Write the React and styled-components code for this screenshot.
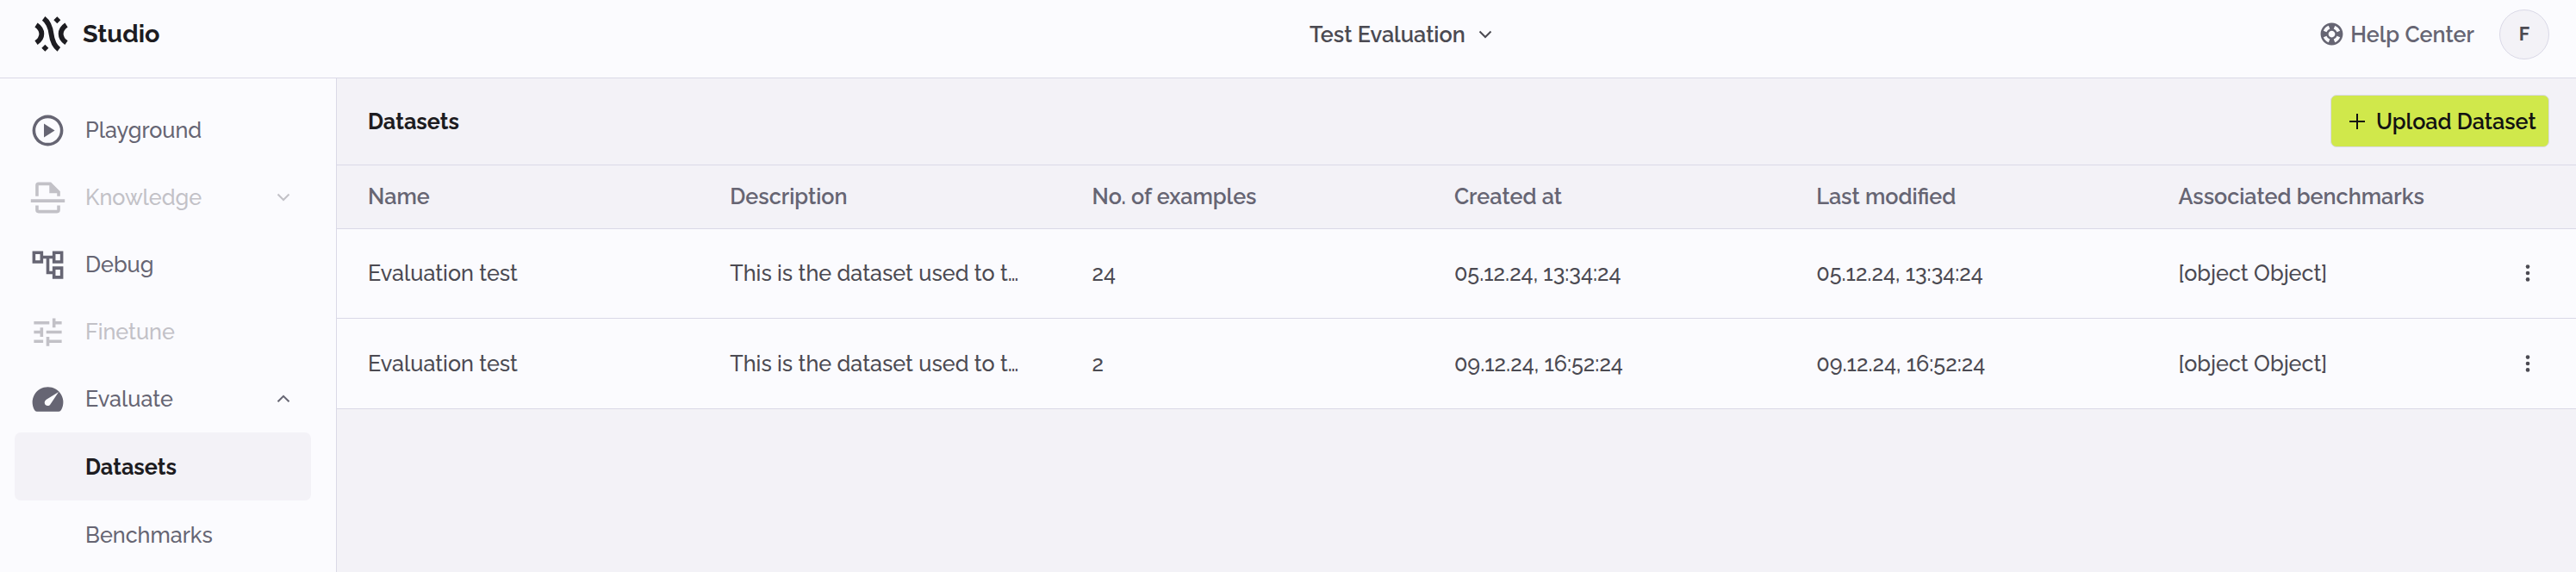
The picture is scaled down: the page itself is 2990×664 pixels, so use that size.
import { MdSupport } from "react-icons/md";
import styled, { createGlobalStyle } from "styled-components";

const navItems = [
	{ name: "Playground", icon: "play" },
	{ name: "Knowledge", icon: "knowledge", disabled: true, chevron: "down" },
	{ name: "Debug", icon: "debug" },
	{ name: "Finetune", icon: "tune", disabled: true },
	{ name: "Evaluate", icon: "gauge", chevron: "up" },
];

const subItems = [{ name: "Datasets", active: true }, { name: "Benchmarks" }];

const columns = [
	"Name",
	"Description",
	"No. of examples",
	"Created at",
	"Last modified",
	"Associated benchmarks",
];

const datasets = [
	{
		name: "Evaluation test",
		description: "This is the dataset used to t…",
		examples: 24,
		created: "05.12.24, 13:34:24",
		modified: "05.12.24, 13:34:24",
		benchmarks: "[object Object]",
	},
	{
		name: "Evaluation test",
		description: "This is the dataset used to t…",
		examples: 2,
		created: "09.12.24, 16:52:24",
		modified: "09.12.24, 16:52:24",
		benchmarks: "[object Object]",
	},
];

const iconPaths = {
	play: "M12 2a10 10 0 1 0 0 20 10 10 0 0 0 0-20zm0 18a8 8 0 1 1 0-16 8 8 0 0 1 0 16zM9.5 7.5v9l7-4.5z",
	knowledge:
		"M4 11V4a2 2 0 0 1 2-2h8l6 6v3h-2V9h-5V4H6v7zM1 13h22v2H1zM4 17h2v3h12v-3h2v3a2 2 0 0 1-2 2H6a2 2 0 0 1-2-2z",
	debug: "M22 11V3h-7v3H9V3H2v8h7V8h2v10h4v3h7v-8h-7v3h-2V8h2v3h7zM7 9H4V5h3v4zm10 6h3v4h-3v-4zm0-10h3v4h-3V5z",
	tune: "M3 17v2h6v-2H3zM3 5v2h10V5H3zm10 16v-2h8v-2h-8v-2h-2v6h2zM7 9v2H3v2h4v2h2V9H7zm14 4v-2H11v2h10zm-6-4h2V7h4V5h-4V3h-2v6z",
	gauge: "M12 4a10 10 0 0 1 8.7 14.9c-.4.7-.9 1.1-1.6 1.1H4.9c-.7 0-1.2-.4-1.6-1.1A10 10 0 0 1 12 4zM19 7.3l-7.9 4.9c-.7.5-1.1 1.1-1.2 1.9-.1 1.2.9 2.1 2 2.1.7 0 1.3-.3 1.7-.9z",
};

const NavIcon = ({ name }) => (
	<svg width="43" height="43" viewBox="0 0 24 24" fill="currentColor">
		<path fillRule="evenodd" d={iconPaths[name]} />
	</svg>
);

const Chevron = ({ up }) => (
	<svg width="16" height="10" viewBox="0 0 16 10" fill="none">
		<path
			d={up ? "M1.5 8.3 8 1.8l6.5 6.5" : "M1.5 1.5 8 8l6.5-6.5"}
			stroke="currentColor"
			strokeWidth="2"
		/>
	</svg>
);

const Logo = () => (
	<svg width="39" height="41" viewBox="0 0 117 123" fill="#1d1c21">
		<g fill="none" stroke="#1d1c21" strokeWidth="17.5">
			<path d="M6 30C18 38 25 48 25 61S18 84 6 92" />
			<path d="M111 30C99 38 92 48 92 61s7 23 19 31" />
			<path d="M32 7C52 22 56 42 58.5 61S65 100 85 115" />
		</g>
		<path d="M79 1l12 12-12 12-12-12zM37 98l12 12-12 12-12-12z" />
	</svg>
);

const App = () => {
	return (
		<Page>
			<GlobalStyle />
			<Header>
				<Brand>
					<Logo />
					<span>Studio</span>
				</Brand>
				<ProjectSelect>
					Test Evaluation
					<Chevron />
				</ProjectSelect>
				<HeaderActions>
					<HelpLink>
						<MdSupport size={31} />
						Help Center
					</HelpLink>
					<Avatar>F</Avatar>
				</HeaderActions>
			</Header>

			<Body>
				<Sidebar>
					{navItems.map((item) => (
						<NavItem key={item.name} $disabled={item.disabled}>
							<NavIcon name={item.icon} />
							<span>{item.name}</span>
							{item.chevron && <Chevron up={item.chevron === "up"} />}
						</NavItem>
					))}
					{subItems.map((item) => (
						<SubItem key={item.name} $active={item.active}>
							{item.name}
						</SubItem>
					))}
				</Sidebar>

				<Main>
					<TitleBar>
						<h1>Datasets</h1>
						<UploadButton>
							<svg width="18" height="18" viewBox="0 0 18 18">
								<path d="M9 0v18M0 9h18" stroke="currentColor" strokeWidth="2" />
							</svg>
							Upload Dataset
						</UploadButton>
					</TitleBar>
					<HeadRow>
						{columns.map((column) => (
							<Cell key={column}>{column}</Cell>
						))}
					</HeadRow>
					{datasets.map((data, index) => (
						<DataRow key={index}>
							<Cell>{data.name}</Cell>
							<Cell>{data.description}</Cell>
							<Cell>{data.examples}</Cell>
							<Cell>{data.created}</Cell>
							<Cell>{data.modified}</Cell>
							<Cell>{data.benchmarks}</Cell>
							<MoreButton>
								<svg width="6" height="20" viewBox="0 0 6 20" fill="currentColor">
									<circle cx="3" cy="2.6" r="2.3" />
									<circle cx="3" cy="10" r="2.3" />
									<circle cx="3" cy="17.4" r="2.3" />
								</svg>
							</MoreButton>
						</DataRow>
					))}
				</Main>
			</Body>
		</Page>
	);
};

export default App;

const GlobalStyle = createGlobalStyle`
	* {
		box-sizing: border-box;
	}
	body {
		margin: 0;
	}
	svg {
		display: block;
		flex-shrink: 0;
	}
`;

const Page = styled.div`
	display: flex;
	flex-direction: column;
	height: 100vh;
	overflow: hidden;
	background: #fbfbfe;
	color: #4b4a52;
	font-family: Raleway, Lato, sans-serif;
	font-size: 25.2px;
	font-weight: 500;
	line-height: 36px;
`;

const Header = styled.header`
	display: grid;
	grid-template-columns: 1480px 1fr auto;
	height: 91px;
	padding: 0 31px 11px 40px;
	border-bottom: 1px solid #dad9e7;
	font-weight: 600;
`;

const Brand = styled.div`
	display: flex;
	align-items: center;
	gap: 17px;
	color: #1d1c21;
	font-size: 28.8px;
	font-weight: 700;
	span {
		margin-top: -2px;
	}
`;

const ProjectSelect = styled.div`
	display: flex;
	align-items: center;
	gap: 15px;
`;

const HeaderActions = styled.div`
	display: flex;
	align-items: center;
	gap: 29px;
`;

const HelpLink = styled.a`
	display: flex;
	align-items: center;
	gap: 6px;
	color: #666573;
`;

const Avatar = styled.div`
	display: flex;
	align-items: center;
	justify-content: center;
	width: 58px;
	height: 58px;
	border: 1px solid #dad9e7;
	border-radius: 50%;
	background: #f3f2f7;
	font-size: 21.6px;
	font-weight: 700;
`;

const Body = styled.div`
	display: flex;
	flex: 1;
	min-height: 0;
`;

const Sidebar = styled.nav`
	width: 391px;
	padding: 21px 29px 0 17px;
	border-right: 1px solid #dad9e7;
	flex-shrink: 0;
`;

const NavItem = styled.div`
	display: flex;
	align-items: center;
	gap: 22px;
	height: 78px;
	padding: 0 24px 0 17px;
	color: ${(props) => (props.$disabled ? "#c2c1c7" : "#666573")};
	span {
		flex: 1;
	}
`;

const SubItem = styled.div`
	display: flex;
	align-items: center;
	height: 79px;
	padding-left: 82px;
	border-radius: 7px;
	background: ${(props) => (props.$active ? "#f3f2f7" : "transparent")};
	color: ${(props) => (props.$active ? "#1d1c21" : "#666573")};
	font-weight: ${(props) => (props.$active ? 700 : 500)};
`;

const Main = styled.main`
	flex: 1;
	min-width: 0;
	background: #f3f2f7;
`;

const TitleBar = styled.div`
	display: flex;
	align-items: center;
	justify-content: space-between;
	height: 101px;
	padding: 0 31px 1px 36px;
	border-bottom: 1px solid #dad9e7;
	h1 {
		margin: 0;
		color: #1d1c21;
		font-size: inherit;
		font-weight: 700;
	}
`;

const UploadButton = styled.button`
	display: flex;
	align-items: center;
	gap: 13px;
	height: 61px;
	width: 254px;
	padding: 0 0 0 21px;
	border: 1px solid #dad9e7;
	border-radius: 7px;
	background: #d0e84b;
	color: #121212;
	font: inherit;
	font-weight: 600;
	white-space: nowrap;
`;

const Row = styled.div`
	display: grid;
	grid-template-columns: repeat(5, 420.3px) 1fr auto;
	align-items: center;
	padding: 0 53px 1px 36px;
	border-bottom: 1px solid #dad9e7;
`;

const HeadRow = styled(Row)`
	height: 74px;
	color: #666573;
	font-weight: 600;
`;

const DataRow = styled(Row)`
	height: 104px;
	background: #fbfbfe;
	&:last-child {
		height: 105px;
	}
`;

const Cell = styled.div`
	white-space: nowrap;
`;

const MoreButton = styled.button`
	padding: 0;
	border: 0;
	background: none;
	color: inherit;
`;
